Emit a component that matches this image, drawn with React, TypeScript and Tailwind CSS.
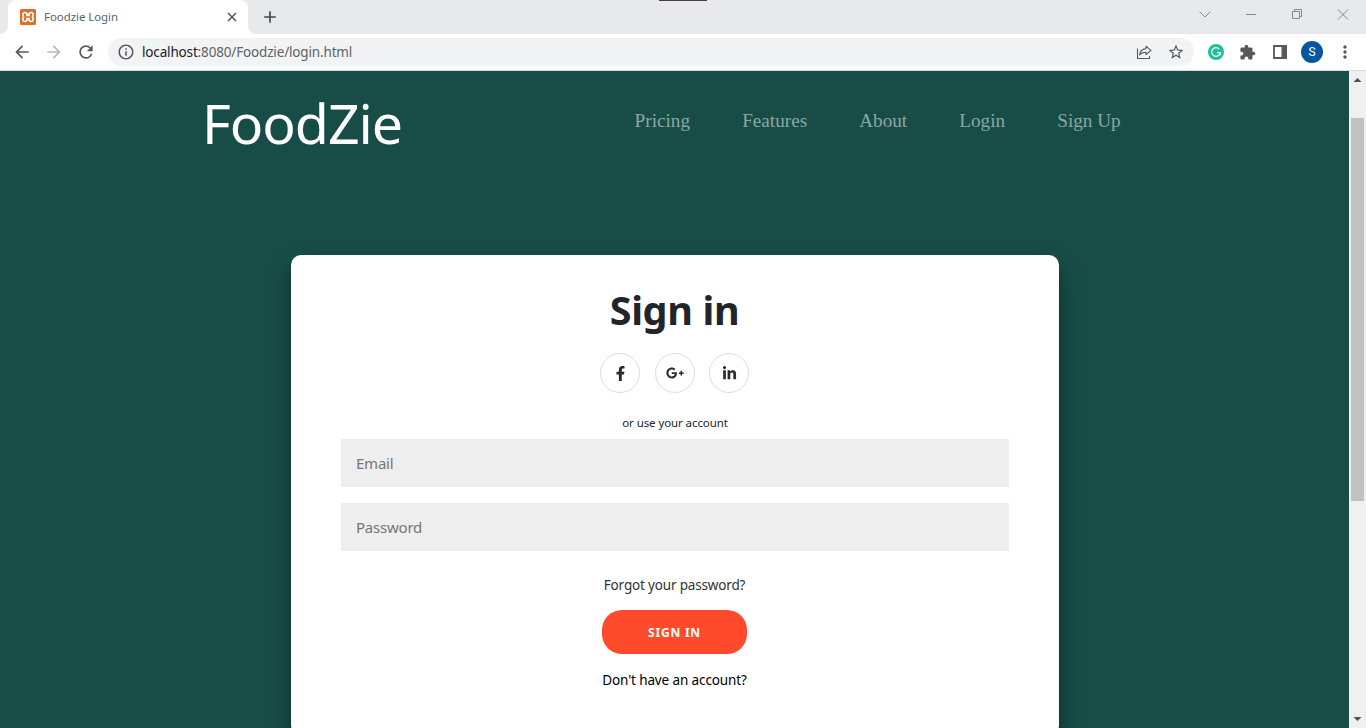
import type { ReactNode } from 'react';
import { FaFacebookF, FaGooglePlusG, FaLinkedinIn } from 'react-icons/fa';
import { MdExtension, MdStarBorder, MdArrowBack, MdArrowForward, MdRefresh, MdInfoOutline, MdMoreVert, MdAdd } from 'react-icons/md';

const navLinks = ['Pricing', 'Features', 'About', 'Login', 'Sign Up'];

function TabStrip() {
  return (
    <div className="relative flex h-[34px] shrink-0 items-stretch bg-[#e8e9ed]">
      <div className="absolute left-[659px] top-0 h-px w-12 bg-[#47364f]" />
      <div className="flex w-2 items-end bg-white">
        <div className="h-full w-2 rounded-br-lg bg-[#e8e9ed]" />
      </div>
      <div className="flex w-[240px] items-center rounded-t-lg bg-white pl-3 pr-[9px]">
        <svg width="16" height="16" viewBox="0 0 16 16" className="shrink-0">
          <rect width="16" height="16" rx="1.5" fill="#dd6f2b" />
          <path d="M5 3.500C2.500 3.500 2.300 6.200 3.600 8c-1.300 1.800-1.100 4.500 1.400 4.500 1.300 0 1.900-.7 1.900-1.900V9.600h2.200v1c0 1.200.6 1.900 1.900 1.900 2.500 0 2.700-2.700 1.400-4.500 1.300-1.800 1.100-4.500-1.400-4.500-1.300 0-1.900.7-1.900 1.900v1H6.900v-1c0-1.200-.6-1.900-1.900-1.900Z" fill="none" stroke="#fff" strokeWidth="1.700" strokeLinejoin="round" />
        </svg>
        <span className="ml-2 whitespace-nowrap text-[11.500px] tracking-[-0.070px] text-[#5f6368]">Foodzie Login</span>
        <svg width="14" height="14" viewBox="0 0 14 14" fill="none" stroke="#505358" strokeWidth="1.500" className="ml-auto">
          <path d="m3 3 8 8M11 3l-8 8" />
        </svg>
      </div>
      <div className="flex w-2 bg-white">
        <div className="w-2 rounded-bl-lg bg-[#e8e9ed]" />
      </div>
      <MdAdd className="ml-1 mt-[7px] size-5 text-[#45484d]" />
      <svg width="160" height="30" viewBox="0 0 160 30" fill="none" stroke="#85878b" className="ml-auto mr-[12px]">
        <path d="m5.500 11.500 5.500 5.500 5.500-5.500M52 14.500h10M98.500 11.500h7v7h-7zM100.500 11.500v-2h7v7h-2M144 9.500l10 10M154 9.500l-10 10" />
      </svg>
    </div>
  );
}

function Toolbar() {
  return (
    <div className="flex h-[37px] shrink-0 items-center border-b border-[#dadce0] bg-white text-[#55585d]">
      <MdArrowBack className="ml-3 size-5" />
      <MdArrowForward className="ml-3 size-5 text-[#b5b7ba]" />
      <MdRefresh className="ml-3 size-5" />
      <div className="ml-3 flex h-7 w-[1086px] items-center rounded-full bg-[#f1f3f4] pl-[9px] pr-[9px]">
        <MdInfoOutline className="size-[18px]" />
        <span className="ml-[7px] whitespace-nowrap pt-px text-[13.500px] tracking-[-0.160px] text-[#5f6368]">
          <span className="text-[#202124]">localhost</span>:8080/Foodzie/login.html
        </span>
        <svg width="16" height="16" viewBox="0 0 16 16" fill="none" stroke="currentColor" strokeWidth="1.100" className="ml-auto">
          <path d="M1.500 4.500v10h12v-2.500" />
          <path d="M10 2.200 15 6.400l-5 4.200V8.200C7 8.100 5 9 3.600 11 4 7.500 6.300 5 10 4.600Z" strokeLinejoin="round" />
        </svg>
        <MdStarBorder className="ml-[15px] size-[18px]" />
      </div>
      <svg width="16" height="16" viewBox="0 0 16 16" className="ml-[14px]">
        <circle cx="8" cy="8" r="8" fill="#1bc197" />
        <path d="M11.300 5.300A4.300 4.300 0 1 0 12.200 8.700H9M12.200 8.300v3" fill="none" stroke="#fff" strokeWidth="1.300" />
      </svg>
      <MdExtension className="ml-[15px] size-[17px]" />
      <svg width="14" height="14" viewBox="0 0 14 14" className="ml-[17px]">
        <path d="M1 1h12v12H1z" fill="none" stroke="currentColor" strokeWidth="1.800" />
        <path d="M8.500 0H14v14H8.500z" fill="currentColor" />
      </svg>
      <div className="ml-[14px] flex size-[22px] items-center justify-center rounded-full bg-[#04569f] font-['Roboto',sans-serif] text-[12px] text-white">S</div>
      <MdMoreVert className="ml-[11.500px] size-5" />
    </div>
  );
}

function SocialButton({ children }: { children: ReactNode }) {
  return (
    <a className="flex size-10 items-center justify-center rounded-full border border-[#dddddd] text-[#2b2b2b]">{children}</a>
  );
}

function Scrollbar() {
  return (
    <div className="flex w-[17px] shrink-0 flex-col items-center bg-[#f0f0f0]">
      <svg width="17" height="17" viewBox="0 0 17 17"><path d="M4.500 11 8.500 7l4 4z" fill="#505050" /></svg>
      <div className="mt-[30px] h-[383px] w-[13px] bg-[#c1c1c1]" />
      <svg width="17" height="17" viewBox="0 0 17 17" className="mt-auto"><path d="m4.500 6 4 4 4-4z" fill="#505050" /></svg>
    </div>
  );
}

function SignInCard() {
  return (
    <form className="ml-[291px] mt-[84px] flex h-[480px] w-[768px] shrink-0 flex-col items-center rounded-[10px] bg-white px-[50px] shadow-[0_14px_28px_rgba(0,0,0,0.25),0_10px_10px_rgba(0,0,0,0.22)]">
      <h1 className="mr-px mt-[31px] h-12 whitespace-nowrap text-[39.500px] font-bold leading-[48px] tracking-[-0.350px] text-[#212529]">Sign in</h1>
      <div className="mr-px mt-[19px] flex gap-[14.500px]">
        <SocialButton><FaFacebookF className="size-[15px]" /></SocialButton>
        <SocialButton><FaGooglePlusG className="size-[18px]" /></SocialButton>
        <SocialButton><FaLinkedinIn className="size-[15px]" /></SocialButton>
      </div>
      <span className="mt-[21px] h-[18px] whitespace-nowrap text-[11.500px] leading-[18px] tracking-[-0.090px] text-[#212529]">or use your account</span>
      <div className="mt-[7px] flex h-12 w-full items-center bg-[#eeeeee] px-[15px] text-[15px] tracking-[-0.220px] text-[#757575]">Email</div>
      <div className="mt-4 flex h-12 w-full items-center bg-[#eeeeee] px-[15px] text-[15px] tracking-[-0.220px] text-[#757575]">Password</div>
      <a className="mr-px mt-6 h-[21px] whitespace-nowrap text-[13.500px] leading-[21px] tracking-[-0.170px] text-[#333333]">Forgot your password?</a>
      <button type="button" className="mr-px mt-[14px] flex h-11 w-[145px] shrink-0 items-center justify-center rounded-[20px] bg-[#ff4b2b] pt-px text-[12px] font-bold tracking-[0.800px] text-white">SIGN IN</button>
      <a className="mr-px mt-4 h-[21px] whitespace-nowrap text-[13.500px] leading-[21px] tracking-[-0.120px] text-black">Don't have an account?</a>
    </form>
  );
}

export default function App() {
  return (
    <div className="flex h-[728px] w-[1366px] flex-col overflow-hidden font-['Noto_Sans','Open_Sans',sans-serif]">
      <TabStrip />
      <Toolbar />
      <div className="flex h-[657px]">
        <main className="flex w-[1349px] flex-col overflow-hidden bg-[#184d47]">
          <header className="flex h-[100px] shrink-0 items-center">
            <div className="ml-[202px] w-[432.600px] whitespace-nowrap pt-[3px] text-[55.500px] leading-[70px] tracking-[-1.050px] text-white">FoodZie</div>
            <nav className="flex gap-[52.100px] font-['Liberation_Serif',serif] text-[19.200px] text-[#8ca6a3]">
              {navLinks.map((label) => (
                <a key={label} className="whitespace-nowrap">{label}</a>
              ))}
            </nav>
          </header>
          <SignInCard />
        </main>
        <Scrollbar />
      </div>
    </div>
  );
}
